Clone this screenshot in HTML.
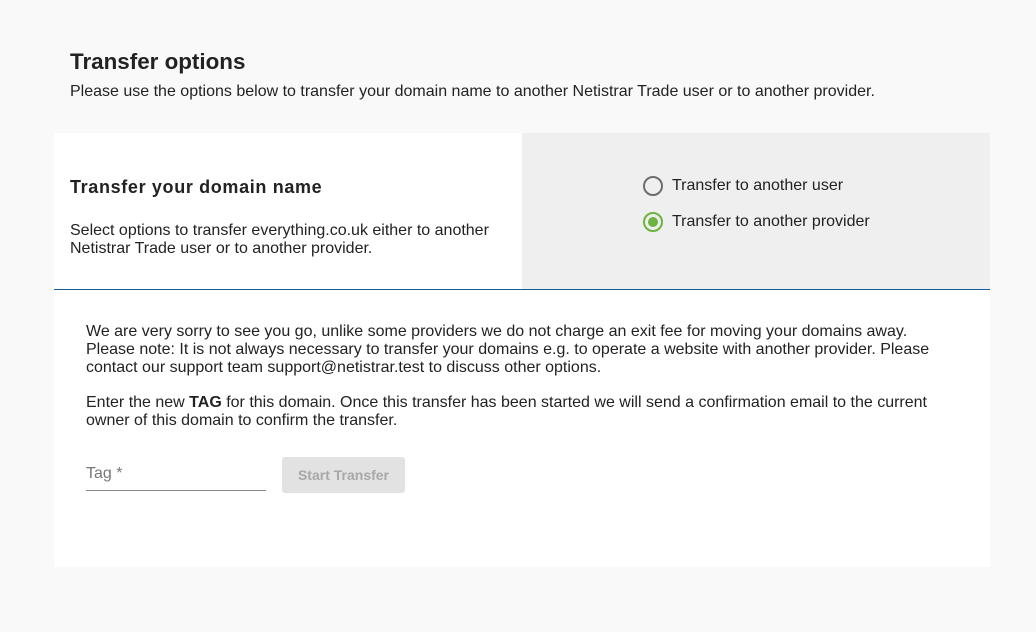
<!DOCTYPE html>
<html><head><style>
*{margin:0;padding:0;box-sizing:border-box}
body{width:1036px;height:632px;background:#f9f9f9;font-family:"Liberation Sans",sans-serif;color:#222;position:relative;overflow:hidden}
.a{position:absolute;white-space:nowrap}
</style></head><body>
<div class="a" style="left:70px;top:49px;font-size:22.4px;font-weight:bold">Transfer options</div>
<div class="a" style="left:70px;top:83px;font-size:16px">Please use the options below to transfer your domain name to another Netistrar Trade user or to another provider.</div>
<div class="a" style="left:54px;top:133px;width:936px;height:434px;background:#fff"></div>
<div class="a" style="left:522px;top:133px;width:468px;height:157px;background:#efefef"></div>
<div class="a" style="left:54px;top:289px;width:936px;height:1px;background:#1a5c96"></div>
<div class="a" style="left:70px;top:177px;font-size:18px;font-weight:bold;letter-spacing:0.65px">Transfer your domain name</div>
<div class="a" style="left:70px;top:222px;font-size:16px;line-height:18px">Select options to transfer everything.co.uk either to another<br>Netistrar Trade user or to another provider.</div>
<div class="a" style="left:643px;top:176px;width:20px;height:20px;border:2px solid #6d6d6d;border-radius:50%"></div>
<div class="a" style="left:672px;top:177px;font-size:16px">Transfer to another user</div>
<div class="a" style="left:643px;top:212px;width:20px;height:20px;border:2px solid #6db33f;border-radius:50%"></div>
<div class="a" style="left:648px;top:217px;width:10px;height:10px;background:#6db33f;border-radius:50%"></div>
<div class="a" style="left:672px;top:213px;font-size:16px">Transfer to another provider</div>
<div class="a" style="left:86px;top:323px;font-size:16px;line-height:18px">We are very sorry to see you go, unlike some providers we do not charge an exit fee for moving your domains away.<br>Please note: It is not always necessary to transfer your domains e.g. to operate a website with another provider. Please<br>contact our support team support@netistrar.test to discuss other options.</div>
<div class="a" style="left:86px;top:394px;font-size:16px;line-height:18px">Enter the new <b>TAG</b> for this domain. Once this transfer has been started we will send a confirmation email to the current<br>owner of this domain to confirm the transfer.</div>
<div class="a" style="left:86px;top:465px;font-size:16px;color:#777">Tag *</div>
<div class="a" style="left:86px;top:490px;width:180px;height:1px;background:#888"></div>
<div class="a" style="left:282px;top:457px;width:123px;height:36px;background:#e2e2e2;border-radius:3px;color:#a8a8a8;font-size:14px;font-weight:bold;text-align:center;line-height:36px">Start Transfer</div>
</body></html>
